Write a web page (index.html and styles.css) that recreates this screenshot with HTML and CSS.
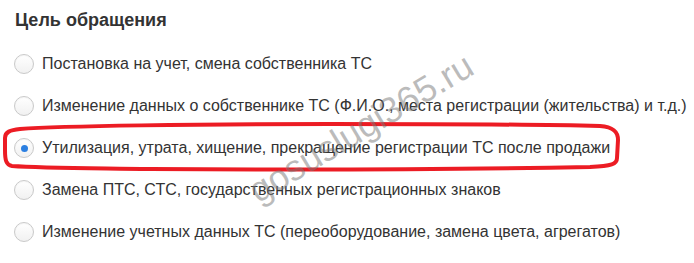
FILE: index.html
```html
<!DOCTYPE html>
<html lang="ru">
<head>
<meta charset="utf-8">
<link rel="stylesheet" href="styles.css">
</head>
<body>
<div class="page">
  <h2 class="title">Цель обращения</h2>
  <ul class="options">
    <li class="option"><span class="radio"></span><span class="label">Постановка на учет, смена собственника ТС</span></li>
    <li class="option"><span class="radio"></span><span class="label">Изменение данных о собственнике ТС (Ф.И.О., места регистрации (жительства) и т.д.)</span></li>
    <li class="option"><span class="radio checked"></span><span class="label">Утилизация, утрата, хищение, прекращение регистрации ТС после продажи</span></li>
    <li class="option"><span class="radio"></span><span class="label">Замена ПТС, СТС, государственных регистрационных знаков</span></li>
    <li class="option"><span class="radio"></span><span class="label">Изменение учетных данных ТС (переоборудование, замена цвета, агрегатов)</span></li>
  </ul>
  <svg class="mark" width="694" height="263" viewBox="0 0 694 263">
    <path d="M20 129 C60 126 200 124 330 124 C450 124 560 125 600 126 C614 127 618 132 618 140 L617 158 C617 164 612 166 590 167 C480 169 300 170 150 169 C80 168 40 168 12 166 C6 165 5 160 5 150 L5 138 C5 132 10 130 20 129 Z" fill="none" stroke="#ec1c24" stroke-width="4" stroke-linejoin="round"/>
  </svg>
  <div class="watermark">gosuslugi365.ru</div>
</div>
</body>
</html>
```
FILE: styles.css
```css
html, body {
  margin: 0;
  padding: 0;
  background: #ffffff;
}
.page {
  position: relative;
  width: 694px;
  height: 263px;
  overflow: hidden;
  font-family: "Liberation Sans", Arial, sans-serif;
  color: #333333;
}
.title {
  margin: 0;
  padding: 10px 0 0 15px;
  font-size: 18px;
  font-weight: bold;
  line-height: 21px;
  color: #333333;
}
.options {
  list-style: none;
  margin: 12px 0 0 0;
  padding: 0 0 0 14px;
}
.option {
  display: flex;
  align-items: center;
  height: 42px;
}
.radio {
  width: 18px;
  height: 18px;
  border-radius: 50%;
  border: 1px solid #c9c9c9;
  background: linear-gradient(#ffffff, #f1f1f1);
  box-shadow: inset 0 1px 1px rgba(0,0,0,0.04);
  flex: none;
  display: flex;
  align-items: center;
  justify-content: center;
}
.radio.checked::after {
  content: "";
  width: 7px;
  height: 7px;
  border-radius: 50%;
  background: #2b7fe1;
}
.label {
  margin-left: 8px;
  font-size: 16px;
  color: #333333;
  white-space: nowrap;
}
.mark {
  position: absolute;
  left: 0;
  top: 0;
  pointer-events: none;
}
.watermark {
  position: absolute;
  left: 361px;
  top: 128px;
  transform: translate(-50%, -50%) rotate(-31deg);
  font-size: 36px;
  color: rgba(120,120,120,0.5);
  white-space: nowrap;
  pointer-events: none;
}
```
